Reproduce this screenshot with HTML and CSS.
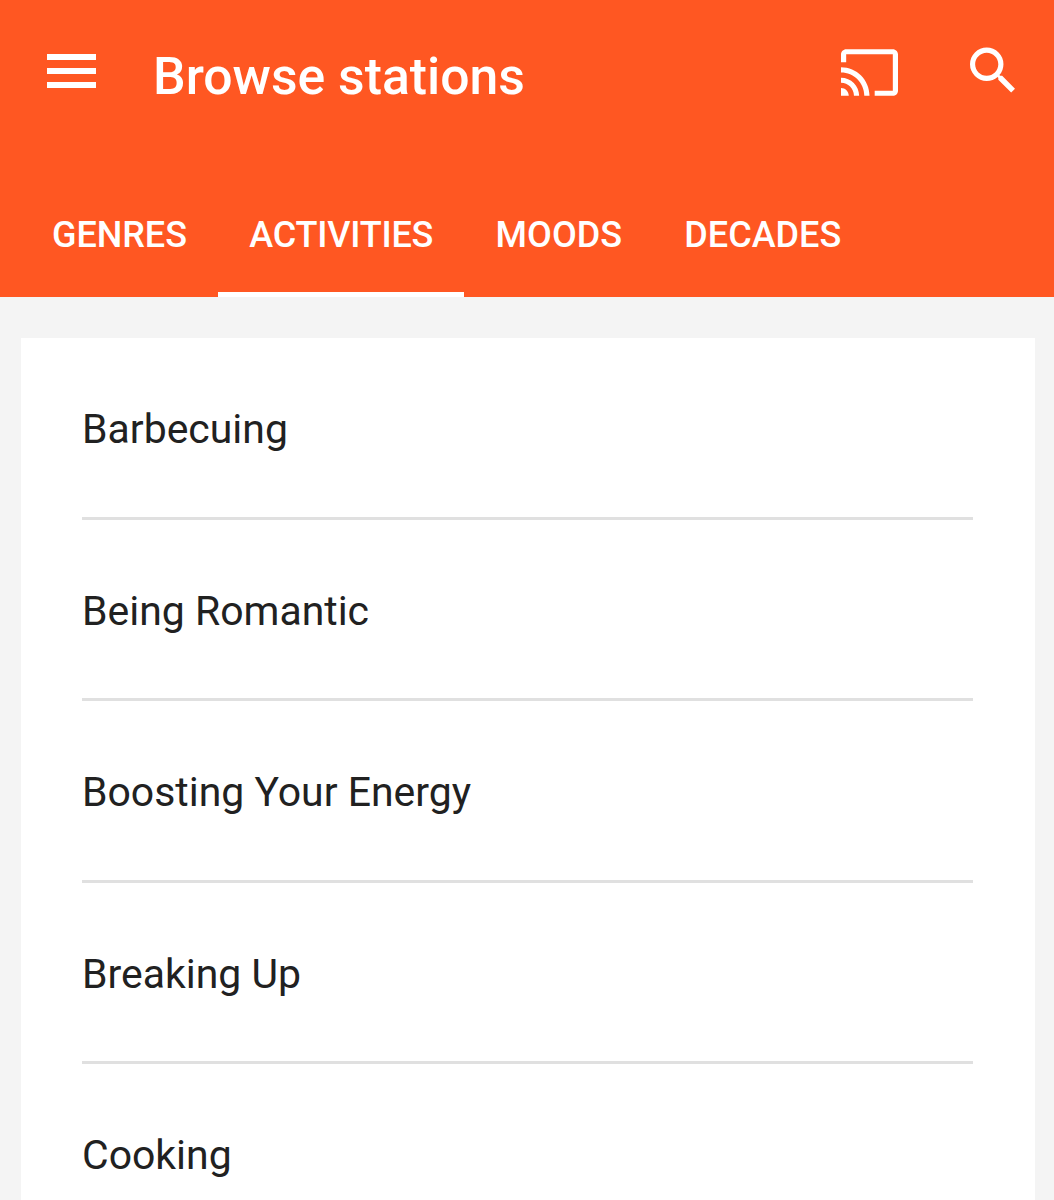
FILE: index.html
```html
<!DOCTYPE html>
<html lang="en">
<head>
  <meta charset="UTF-8" />
  <meta name="viewport" content="width=device-width, initial-scale=1" />
  <title>Browse stations</title>
  <link rel="stylesheet" href="styles.css">
</head>
<body>

  <header>
    <div class="toolbar">
      <button class="menu-btn" aria-label="Menu">
        <svg viewBox="0 0 49 34"><path d="M0 0h49v6H0zM0 14h49v6H0zM0 28h49v6H0z"/></svg>
      </button>
      <h1>Browse stations</h1>
      <button class="cast-btn" aria-label="Cast">
        <svg viewBox="1 3 22 18"><path d="M21 3H3c-1.100 0-2 .9-2 2v3h2V5h18v14h-7v2h7c1.100 0 2-.9 2-2V5c0-1.100-.9-2-2-2zM1 18v3h3c0-1.660-1.340-3-3-3zm0-4v2c2.760 0 5 2.240 5 5h2c0-3.870-3.130-7-7-7zm0-4v2c4.970 0 9 4.030 9 9h2c0-6.080-4.930-11-11-11z"/></svg>
      </button>
      <button class="search-btn" aria-label="Search">
        <svg viewBox="3 3 17.490 17.490"><path d="M15.500 14h-.79l-.28-.27A6.471 6.471 0 0 0 16 9.500 6.500 6.500 0 1 0 9.500 16c1.610 0 3.090-.59 4.230-1.570l.27.28v.79l5 4.990L20.490 19l-4.990-5zm-6 0C7.010 14 5 11.990 5 9.500S7.010 5 9.500 5 14 7.010 14 9.500 11.990 14 9.500 14z"/></svg>
      </button>
    </div>
    <nav class="tabs">
      <a href="#">GENRES</a>
      <a href="#" class="active">ACTIVITIES</a>
      <a href="#">MOODS</a>
      <a href="#">DECADES</a>
    </nav>
  </header>

  <main>
    <ul class="stations">
      <li>Barbecuing</li>
      <li>Being Romantic</li>
      <li>Boosting Your Energy</li>
      <li>Breaking Up</li>
      <li>Cooking</li>
    </ul>
  </main>

</body>
</html>
```

FILE: styles.css
```css
* {
  box-sizing: border-box;
}
body {
  margin: 0;
  height: 1200px;
  overflow: hidden;
  background: #f4f4f4;
  font-family: Roboto, sans-serif;
  color: #212121;
}
header {
  height: 297px;
  background: #ff5722;
  color: #fff;
  display: flex;
  flex-direction: column;
  justify-content: space-between;
}
.toolbar {
  height: 142px;
  padding: 0 39px 0 47px;
  display: flex;
  align-items: center;
}
h1 {
  margin: 10px auto 0 57px;
  font-size: 51.7px;
  font-weight: 500;
  white-space: nowrap;
}
button {
  padding: 0;
  border: none;
  background: none;
  cursor: pointer;
}
svg {
  display: block;
  width: 100%;
  height: 100%;
  fill: #fff;
}
.menu-btn {
  width: 49px;
  height: 34px;
}
.cast-btn {
  width: 57px;
  height: 47px;
  margin-top: 2px;
}
.search-btn {
  width: 45px;
  height: 46px;
  margin: 0 0 2px 72px;
}
.tabs {
  height: 125px;
  padding-left: 21px;
  display: flex;
}
.tabs a {
  padding: 0 31.2px;
  line-height: 127px;
  font-size: 36px;
  font-weight: 500;
  color: #fff;
  text-decoration: none;
}
.tabs a:first-child {
  padding-left: 31px;
  letter-spacing: -0.05px;
}
.tabs .active {
  letter-spacing: -0.2px;
  box-shadow: inset 0 -5px #fff;
}
main {
  padding: 41px 19px 0 21px;
}
.stations {
  margin: 0;
  padding: 0 62px 0 61px;
  list-style: none;
  background: #fff;
}
.stations li {
  height: 181.6px;
  line-height: 183.500px;
  font-size: 40.950px;
  border-bottom: 3px solid #e0e0e0;
}
```
